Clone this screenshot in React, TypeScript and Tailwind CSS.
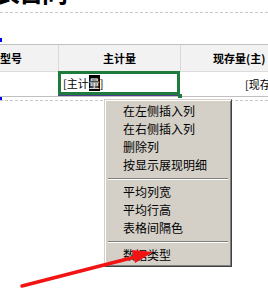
import React from 'react'

const menuGroups = [
  ['在左侧插入列', '在右侧插入列', '删除列', '按显示展现明细'],
  ['平均列宽', '平均行高', '表格间隔色'],
  ['数据类型'],
]

function Separator() {
  return (
    <div className="h-[9px] flex flex-col justify-center mx-[3px]">
      <div className="h-px bg-[#808080]" />
      <div className="h-px bg-white" />
    </div>
  )
}

function ContextMenu() {
  return (
    <div className="absolute left-[104px] top-[99px] w-[128px] bg-[#d4d0c8] border border-t-[#d4d0c8] border-l-[#d4d0c8] border-r-[#404040] border-b-[#404040] shadow-[inset_1px_1px_0_#fff,inset_-1px_-1px_0_#808080] py-[2px]">
      {menuGroups.map((group, gi) => (
        <div key={gi}>
          {gi > 0 && <Separator />}
          {group.map((label) => (
            <div key={label} className="h-[18px] flex items-center pl-[18px] text-[12px] leading-none text-black">
              {label}
            </div>
          ))}
        </div>
      ))}
    </div>
  )
}

export default function App() {
  return (
    <div
      className="relative w-[268px] h-[292px] overflow-hidden bg-white"
      style={{ fontFamily: '"Noto Sans CJK SC", "Noto Sans", sans-serif' }}
    >
      {/* report title, scrolled mostly out of view */}
      <div className="h-[12px] overflow-hidden">
        <div className="ml-[-6px] mt-[-22px] text-[26px] leading-[26px] font-bold text-black whitespace-nowrap tracking-[-2px]">
          表合同
        </div>
      </div>
      <div className="border-t border-dashed border-[#c8c8c8]" />

      <div className="h-[31px]" />

      {/* header row */}
      <div className="flex h-[28px] border-t border-b border-t-[#c0c0c0] border-b-[#dcdcdc] bg-[#f2f2f2] text-[11px] font-bold text-black whitespace-nowrap">
        <div className="w-[58px] shrink-0 flex items-center">型号</div>
        <div className="w-[122px] shrink-0 flex items-center justify-center border-l border-[#d9d9d9]">主计量</div>
        <div className="flex-1 flex items-center pl-[32px] border-l border-[#d9d9d9]">现存量(主)</div>
      </div>

      {/* data row */}
      <div className="flex h-[25px] border-b border-[#c0c0c0] text-[11px] text-black whitespace-nowrap">
        <div className="w-[58px] shrink-0" />
        <div className="relative w-[122px] shrink-0 flex flex-col">
          <div className="h-[24px] border-[3px] border-[#1f7a3e] flex items-center pl-[2px] mt-[-1px]">
            <span>[主计</span>
            <span className="bg-black text-white">量</span>
            <span>]</span>
          </div>
          <div className="h-px bg-[#4b3c8c]" />
          <div className="absolute right-[-2px] bottom-[-2px] w-[4px] h-[4px] bg-[#1f7a3e]" />
        </div>
        <div className="flex-1 flex items-center pl-[65px]">[现存量(主)]</div>
      </div>

      <div className="mt-[3px] border-t border-dashed border-[#c8c8c8]" />

      {/* blue corner marks */}
      <div className="absolute left-0 top-[38px] w-[2px] h-[4px] bg-[#0000ff]" />
      <div className="absolute left-0 top-[97px] w-[2px] h-[3px] bg-[#0000ff]" />

      <ContextMenu />

      <svg className="absolute left-0 top-0" width="268" height="292" viewBox="0 0 268 292">
        <line x1="22" y1="286" x2="135" y2="257" stroke="#f21414" strokeWidth="3.5" strokeLinecap="round" />
        <polygon points="153,252 135,263 132,250" fill="#f21414" />
      </svg>
    </div>
  )
}
